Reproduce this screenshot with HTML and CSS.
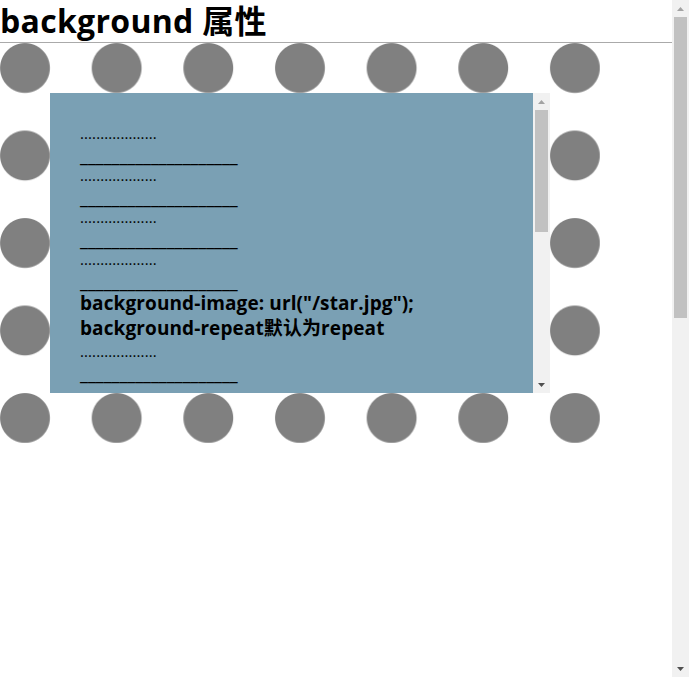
FILE: index.html
```html
<!DOCTYPE html>
<html lang="zh-CN">
<head>
<meta charset="utf-8">
<title>background 属性</title>
<link rel="stylesheet" href="styles.css">
</head>
<body>
<h1 class="title">background 属性</h1>
<div class="stage">
  <div class="box">
    <div class="box-content">
      <div class="lines">
        <div class="dots">...................</div>
        <div class="under">____________________</div>
        <div class="dots">...................</div>
        <div class="under">____________________</div>
        <div class="dots">...................</div>
        <div class="under">____________________</div>
        <div class="dots">...................</div>
        <div class="under">____________________</div>
      </div>
      <div class="strong">background-image: url("/star.jpg");<br>background-repeat默认为repeat</div>
      <div class="lines">
        <div class="dots">...................</div>
        <div class="under">____________________</div>
        <div class="dots">...................</div>
        <div class="under">____________________</div>
        <div class="dots">...................</div>
        <div class="under">____________________</div>
        <div class="dots">...................</div>
        <div class="under">____________________</div>
        <div class="dots">...................</div>
        <div class="under">____________________</div>
        <div class="dots">...................</div>
        <div class="under">____________________</div>
        <div class="dots">...................</div>
        <div class="under">____________________</div>
        <div class="dots">...................</div>
        <div class="under">____________________</div>
        <div class="dots">...................</div>
        <div class="under">____________________</div>
      </div>
    </div>
    <div class="vscroll">
      <div class="sb-btn"><svg width="7" height="4" viewBox="0 0 7 4"><polygon points="0,4 7,4 3.5,0" fill="#a3a3a3"/></svg></div>
      <div class="sb-track"><div class="sb-thumb inner-thumb"></div></div>
      <div class="sb-btn"><svg width="7" height="4" viewBox="0 0 7 4"><polygon points="0,0 7,0 3.5,4" fill="#505050"/></svg></div>
    </div>
  </div>
</div>
<div class="vscroll page-scroll">
  <div class="sb-btn"><svg width="7" height="4" viewBox="0 0 7 4"><polygon points="0,4 7,4 3.5,0" fill="#a3a3a3"/></svg></div>
  <div class="sb-track"><div class="sb-thumb page-thumb"></div></div>
  <div class="sb-btn"><svg width="7" height="4" viewBox="0 0 7 4"><polygon points="0,0 7,0 3.5,4" fill="#505050"/></svg></div>
</div>
</body>
</html>
```

FILE: styles.css
```css
html, body {
  overflow: hidden;
}
body {
  margin: 0;
  font-family: "Open Sans", "Noto Sans CJK SC", sans-serif;
  color: #000;
  background: #fff;
}
.title {
  margin: 0;
  height: 42px;
  font-size: 32px;
  line-height: 42px;
  font-weight: 700;
  letter-spacing: 0.3px;
  border-bottom: 1px solid #aaaaaa;
  white-space: nowrap;
}
.stage {
  width: 500px;
  height: 300px;
  padding: 50px;
  background-image: radial-gradient(circle at 25px 25px, #808080 0, #808080 24.4px, rgba(128,128,128,0) 25.4px);
  background-size: 91.667px 87.5px;
  background-repeat: repeat;
}
.box {
  display: flex;
  width: 500px;
  height: 300px;
  background: #7aa0b4;
}
.box-content {
  flex: 1;
  padding: 30px;
  overflow: hidden;
}
.lines {
  font-size: 15px;
  line-height: 21px;
  white-space: nowrap;
}
.dots {
  height: 21px;
  letter-spacing: 0.1px;
}
.under {
  box-sizing: border-box;
  height: 21px;
  padding-top: 1px;
  font-size: 18px;
  line-height: 20px;
}
.strong {
  font-size: 19px;
  line-height: 25px;
  font-weight: 700;
  letter-spacing: 0.1px;
  white-space: nowrap;
}

.vscroll {
  display: flex;
  flex-direction: column;
  width: 17px;
  background: #f1f1f1;
  flex-shrink: 0;
}
.sb-btn {
  display: flex;
  align-items: center;
  justify-content: center;
  height: 17px;
  flex-shrink: 0;
}
.sb-btn svg {
  display: block;
}
.sb-track {
  flex: 1;
  display: flex;
  flex-direction: column;
  align-items: center;
}
.sb-thumb {
  width: 13px;
  background: #c1c1c1;
}
.inner-thumb {
  height: 122px;
}
.page-thumb {
  height: 301px;
}
.page-scroll {
  position: fixed;
  top: 0;
  right: 0;
  height: 100vh;
}
```
